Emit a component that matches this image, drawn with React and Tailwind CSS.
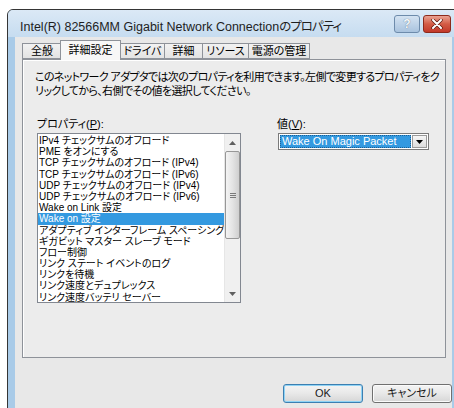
import React from "react";

const jp = "font-['Liberation_Sans','Noto_Sans_CJK_JP',sans-serif] [font-feature-settings:'palt']";

const tabs = [
  { label: "全般", w: "w-[39px]" },
  { label: "詳細設定", w: "w-[61px]" },
  { label: "ドライバ", w: "w-[44px]" },
  { label: "詳細", w: "w-[38px]" },
  { label: "リソース", w: "w-[46px]" },
  { label: "電源の管理", w: "w-[62px]" },
];

const properties = [
  "IPv4 チェックサムのオフロード",
  "PME をオンにする",
  "TCP チェックサムのオフロード (IPv4)",
  "TCP チェックサムのオフロード (IPv6)",
  "UDP チェックサムのオフロード (IPv4)",
  "UDP チェックサムのオフロード (IPv6)",
  "Wake on Link 設定",
  "Wake on 設定",
  "アダプティブ インターフレーム スペーシング",
  "ギガビット マスター スレーブ モード",
  "フロー制御",
  "リンク ステート イベントのログ",
  "リンクを待機",
  "リンク速度とデュプレックス",
  "リンク速度バッテリ セーバー",
];

const Button = ({ children, focused }) => (
  <button
    className={`w-[80px] h-[19px] rounded-[3px] border text-[11px] leading-none text-[#1a1a1a] bg-gradient-to-b from-[#f4f4f4] via-[#e8e8e8] to-[#d6d6d6] ${
      focused ? "border-[#3c7fb1] shadow-[inset_0_0_0_1px_#8fd3f5]" : "border-[#707070] shadow-[inset_0_0_0_1px_#fbfbfb]"
    }`}
  >
    {children}
  </button>
);

export default function App() {
  const selected = 7;

  return (
    <div className={`w-[454px] h-[408px] overflow-hidden bg-white pl-[7px] pt-[9px] ${jp}`}>
      {/* Window frame */}
      <div className="w-[453px] h-[420px] border border-[#353535] rounded-tl-[6px] bg-[#a9cbe8] flex flex-col">
        {/* Title bar */}
        <div className="h-[27px] shrink-0 flex items-center pl-[12px] pr-[8px] rounded-tl-[5px] bg-gradient-to-b from-[#dbe9f6] to-[#c6dcf0]">
          <span className="mt-[8px] text-[12.5px] text-[#1e1e1e] whitespace-nowrap">
            Intel(R) 82566MM Gigabit Network Connection<span className="tracking-[-1px]">のプロパティ</span>
          </span>
          <div className="ml-auto flex gap-[3px]">
            <div className="w-[26px] h-[18px] rounded-[3px] border border-[#6d8bab] bg-gradient-to-b from-[#d4e3f2] to-[#a9c3de] flex items-center justify-center text-[12px] font-bold text-[#f5f8fb] [text-shadow:0_0_1px_#445b75]">
              ?
            </div>
            <div className="w-[28px] h-[18px] rounded-[3px] border border-[#8c2a1c] bg-gradient-to-b from-[#e9a293] via-[#d35b45] to-[#c2382a] flex items-center justify-center">
              <svg width="12" height="10" viewBox="0 0 12 10">
                <path d="M2 1 L10 9 M10 1 L2 9" stroke="#5a1a10" strokeWidth="3.4" strokeLinecap="round" />
                <path d="M2 1 L10 9 M10 1 L2 9" stroke="#ffffff" strokeWidth="2" strokeLinecap="round" />
              </svg>
            </div>
          </div>
        </div>

        {/* Client area */}
        <div className="ml-[7px] w-[437px] flex-1 bg-[#e8e8e8] pl-[7px] pt-[5px] flex flex-col">
          {/* Tabs */}
          <div className="flex items-end h-[17px] relative z-10">
            {tabs.map((t, i) =>
              i === 1 ? (
                <div
                  key={t.label}
                  className={`${t.w} h-[20px] -mb-[1px] -mx-[1px] border border-b-0 border-[#8e9299] bg-[#f7f7f7] text-[11px] text-black flex items-center justify-center whitespace-nowrap`}
                >
                  {t.label}
                </div>
              ) : (
                <div
                  key={t.label}
                  className={`${t.w} h-[16px] border border-r-0 last:border-r border-[#8e9299] bg-gradient-to-b from-[#f2f2f2] to-[#e3e3e3] text-[11px] text-black flex items-center justify-center whitespace-nowrap`}
                >
                  {t.label}
                </div>
              )
            )}
          </div>

          {/* Tab page */}
          <div className="w-[424px] h-[299px] border border-[#8e9299] bg-[#ececec] shadow-[inset_1px_1px_0_#ffffff] pl-[12px] pt-[10px]">
            <p className="text-[11px] tracking-[-0.65px] leading-[14px] text-black whitespace-nowrap">
              このネットワーク アダプタでは次のプロパティを利用できます。左側で変更するプロパティをク
              <br />
              リックしてから、右側でその値を選択してください。
            </p>

            <div className="flex mt-[19px] pl-[2px]">
              {/* Property list */}
              <div className="w-[204px]">
                <div className="text-[11px] leading-[14px] text-black">
                  プロパティ(<span className="underline">P</span>):
                </div>
                <div className="mt-[2px] h-[170px] border border-[#828790] bg-white flex overflow-hidden">
                  <div className="flex-1 overflow-hidden pt-[1px]">
                    {properties.map((p, i) => (
                      <div
                        key={p}
                        className={`h-[11.2px] leading-[11px] pl-[1px] text-[10px] whitespace-nowrap ${
                          i === selected ? "bg-[#3399e0] text-white" : "text-black"
                        }`}
                      >
                        {p}
                      </div>
                    ))}
                  </div>
                  {/* Scrollbar */}
                  <div className="w-[16px] bg-[#f0f0f0] border-l border-[#e6e6e6] flex flex-col items-center">
                    <div className="h-[17px] w-full flex items-center justify-center">
                      <svg width="7" height="4" viewBox="0 0 7 4">
                        <path d="M0 4 L3.5 0 L7 4 Z" fill="#606060" />
                      </svg>
                    </div>
                    <div className="w-[15px] h-[88px] rounded-[2px] border border-[#979797] bg-gradient-to-r from-[#f4f4f4] via-[#e4e4e4] to-[#cfcfcf] flex items-center justify-center">
                      <div className="flex flex-col gap-[1px]">
                        <div className="w-[6px] h-[1px] bg-[#7a7a7a]" />
                        <div className="w-[6px] h-[1px] bg-[#7a7a7a]" />
                        <div className="w-[6px] h-[1px] bg-[#7a7a7a]" />
                      </div>
                    </div>
                    <div className="flex-1" />
                    <div className="h-[17px] w-full flex items-center justify-center">
                      <svg width="7" height="4" viewBox="0 0 7 4">
                        <path d="M0 0 L3.5 4 L7 0 Z" fill="#606060" />
                      </svg>
                    </div>
                  </div>
                </div>
              </div>

              {/* Value */}
              <div className="ml-[36px]">
                <div className="text-[11px] leading-[14px] text-black">
                  値(<span className="underline">V</span>):
                </div>
                <div className="mt-[2px] ml-[1px] w-[151px] h-[17px] border border-[#7a7a7a] bg-white flex items-center p-[1px]">
                  <div className="flex-1 h-full bg-[#3399e0] text-white text-[11px] leading-[13px] pl-[2px] whitespace-nowrap outline outline-1 outline-dotted outline-[#1d5f91] -outline-offset-1">
                    Wake On Magic Packet
                  </div>
                  <div className="w-[15px] h-full ml-[1px] border border-[#9a9a9a] bg-gradient-to-b from-[#f7f7f7] to-[#dcdcdc] flex items-center justify-center">
                    <svg width="7" height="4" viewBox="0 0 7 4">
                      <path d="M0 0 L3.5 4 L7 0 Z" fill="#000000" />
                    </svg>
                  </div>
                </div>
              </div>
            </div>
          </div>

          {/* Dialog buttons */}
          <div className="flex justify-end gap-[9px] w-[430px] mt-[26px]">
            <Button focused>OK</Button>
            <Button>キャンセル</Button>
          </div>
        </div>
      </div>
    </div>
  );
}
